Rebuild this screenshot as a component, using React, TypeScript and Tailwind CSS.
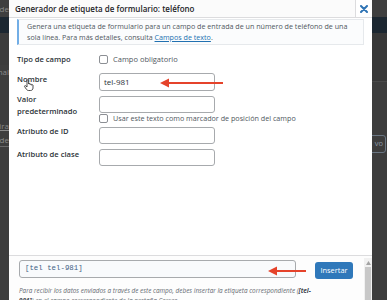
import React from "react";

function Arrow({ x1, x2, y }: { x1: number; x2: number; y: number }) {
  return (
    <g>
      <line x1={x1 + 7} y1={y} x2={x2} y2={y} stroke="#e5432b" strokeWidth={2} />
      <polygon points={`${x1},${y} ${x1 + 9},${y - 4.5} ${x1 + 9},${y + 4.5}`} fill="#e5432b" />
    </g>
  );
}

function Checkbox() {
  return <div className="w-[9px] h-[9px] rounded-[2px] border border-[#8c8f94] bg-white shrink-0" />;
}

export default function App() {
  return (
    <div className="relative w-[387px] h-[300px] overflow-hidden flex bg-[#3d3d3d] font-['Open_Sans',sans-serif] text-[#2c3338]">
      {/* left admin strip */}
      <div className="w-[9px] shrink-0 flex flex-col overflow-hidden text-[8px] text-[#8a8a8a]">
        <div className="h-[17px] bg-[#3f3f3f] flex items-center justify-end leading-none">de</div>
        <div className="h-[16px] bg-[#1c2731]" />
        <div className="h-[32px] bg-[#3b3b3b]" />
        <div className="h-[14px] flex items-center justify-end">nal</div>
        <div className="h-[40px]" />
        <div className="h-[14px] flex items-center justify-end underline">lira</div>
        <div className="h-[14px] flex items-center justify-end border-b border-[#6a6a6a]">de</div>
      </div>

      {/* modal */}
      <div className="w-[363px] shrink-0 h-[300px] flex flex-col bg-white">
        <div className="h-[18px] shrink-0 flex items-stretch border-b border-[#dcdcde] bg-[#fbfbfb]">
          <div className="pl-[6px] flex items-center text-[8px] font-semibold text-[#1d2327] leading-none">
            Generador de etiqueta de formulario: teléfono
          </div>
          <div className="ml-auto w-[17px] bg-white border-l border-[#dcdcde] flex items-center justify-center">
            <svg width="8" height="8" viewBox="0 0 8 8">
              <path d="M1 1 L7 7 M7 1 L1 7" stroke="#2f74b5" strokeWidth="2" strokeLinecap="round" />
            </svg>
          </div>
        </div>

        <div className="h-[237px] shrink-0 px-[8px] flex flex-col">
          <div className="mt-[1px] h-[26px] border border-[#e6e9ec] border-l-2 border-l-[#72aee6] bg-[#fbfcfd] pl-[8px] pt-[1px] text-[7.15px] leading-[11px] text-[#50575e]">
            <div className="whitespace-nowrap">Genera una etiqueta de formulario para un campo de entrada de un número de teléfono de una</div>
            <div className="whitespace-nowrap">
              sola línea. Para más detalles, consulta <span className="text-[#2271b1] underline">Campos de texto</span>.
            </div>
          </div>

          <div className="mt-[9px] flex h-[11px] items-center">
            <div className="w-[82px] text-[7.6px] font-semibold leading-[11px]">Tipo de campo</div>
            <Checkbox />
            <div className="ml-[5px] text-[7.5px] leading-[11px] text-[#50575e]">Campo obligatorio</div>
          </div>

          <div className="mt-[8px] flex">
            <div className="w-[82px] text-[7.6px] font-semibold leading-[12px]">Nombre</div>
            <div className="w-[116px] h-[18px] rounded-[3px] border border-[#a7aaad] flex items-center pl-[4px] text-[8px] text-[#2c3338]">
              tel-981
            </div>
          </div>

          <div className="mt-[2px] flex">
            <div className="w-[82px] text-[7.6px] font-semibold leading-[12px]">
              <div>Valor</div>
              <div>predeterminado</div>
            </div>
            <div className="flex flex-col">
              <div className="mt-[3px] w-[116px] h-[17px] rounded-[3px] border border-[#a7aaad]" />
              <div className="mt-[1px] flex items-center h-[9px]">
                <Checkbox />
                <div className="ml-[5px] text-[7.2px] leading-[9px] text-[#50575e] whitespace-nowrap">
                  Usar este texto como marcador de posición del campo
                </div>
              </div>
            </div>
          </div>

          <div className="mt-[2px] flex">
            <div className="w-[82px] text-[7.6px] font-semibold leading-[12px]">Atributo de ID</div>
            <div className="mt-[2px] w-[116px] h-[17px] rounded-[3px] border border-[#a7aaad]" />
          </div>

          <div className="mt-[4px] flex">
            <div className="w-[82px] text-[7.6px] font-semibold leading-[12px]">Atributo de clase</div>
            <div className="mt-[1px] w-[116px] h-[17px] rounded-[3px] border border-[#a7aaad]" />
          </div>
        </div>

        <div className="flex-1 flex border-t border-[#dcdcde] bg-[#fdfdfd]">
          <div className="flex-1 flex flex-col">
            <div className="flex items-start">
              <div className="ml-[10px] mt-[4px] w-[277px] h-[18px] rounded-[3px] border border-[#a7aaad] bg-[#f8fafc] flex items-center pl-[5px] font-['Liberation_Mono',monospace] text-[7.4px] text-[#3f6184]">
                [tel tel-981]
              </div>
              <div className="ml-[19px] mt-[6px] w-[38px] h-[17px] rounded-[3px] bg-[#2f78ba] flex items-center justify-center text-[7.4px] text-white">
                Insertar
              </div>
            </div>
            <div className="ml-[10px] mt-[7px] text-[6.4px] italic leading-[10px] text-[#646970] whitespace-nowrap">
              <div>
                Para recibir los datos enviados a través de este campo, debes insertar la etiqueta correspondiente (<b className="text-[#3c434a]">[tel-</b>
              </div>
              <div>
                <b className="text-[#3c434a]">981]</b>) en el campo correspondiente de la pestaña Correo.
              </div>
            </div>
          </div>
          <div className="w-[8px] mt-[2px] flex flex-col bg-[#f1f1f1]">
            <div className="h-[9px] flex items-center justify-center">
              <svg width="5" height="4" viewBox="0 0 5 4">
                <polygon points="2.5,0 5,4 0,4" fill="#a3a3a3" />
              </svg>
            </div>
            <div className="flex-1 mx-[1px] bg-[#c8c8c8]" />
          </div>
        </div>
      </div>

      {/* right admin strip */}
      <div className="w-[15px] shrink-0 flex flex-col overflow-hidden text-[8px] text-[#8a8a8a]">
        <div className="h-[17px] bg-[#3f3f3f]" />
        <div className="h-[16px] bg-[#1c2731]" />
        <div className="h-[49px] bg-[#383838] border-b border-[#4a4a4a]" />
        <div className="h-[53px]" />
        <div className="h-[18px] w-[24px] -ml-[10px] rounded-[3px] border border-[#6a7683] flex items-center justify-end pr-[2px] text-[7.5px] text-[#8c9aa8]">
          vo
        </div>
      </div>

      {/* annotations */}
      <svg className="absolute left-0 top-0 pointer-events-none" width="387" height="300">
        <Arrow x1={160} x2={223} y={83} />
        <Arrow x1={268} x2={306} y={271} />
        <g transform="translate(24 79)">
          <path
            d="M3 1.5 C3 0.7 4.6 0.7 4.6 1.5 L4.6 5 C4.6 4.3 6.1 4.3 6.1 5 L6.1 5.6 C6.1 4.9 7.6 4.9 7.6 5.6 L7.6 6.2 C7.6 5.6 9 5.6 9 6.2 L9 9 C9 10.5 8 11.5 6.5 11.5 L4.5 11.5 C3.5 11.5 2.8 10.8 2.2 10 L0.6 7.6 C0.2 7 1 6.2 1.7 6.8 L3 8 Z"
            fill="white"
            stroke="#222"
            strokeWidth="0.8"
            strokeLinejoin="round"
          />
        </g>
      </svg>
    </div>
  );
}
